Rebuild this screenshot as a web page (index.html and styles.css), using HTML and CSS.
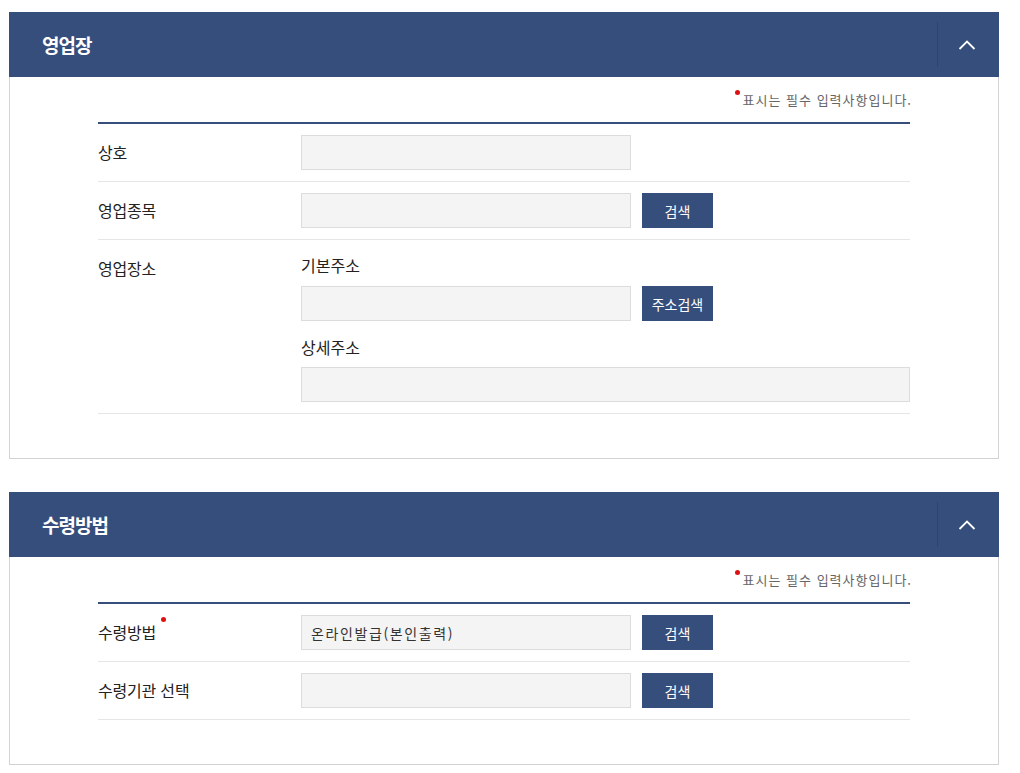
FILE: index.html
```html
<!DOCTYPE html>
<html lang="ko">
<head>
<meta charset="utf-8">
<title>영업장</title>
<link rel="stylesheet" href="styles.css">
</head>
<body>
<div class="page">
  <section class="panel">
    <div class="panel-head">
      <h2 class="panel-title">영업장</h2>
      <button class="toggle" type="button" aria-label="접기">
        <svg width="18" height="10" viewBox="0 0 18 10"><path d="M1.5 9 L9 1.5 L16.5 9" fill="none" stroke="#fff" stroke-width="1.8"/></svg>
      </button>
    </div>
    <div class="panel-body">
      <p class="req-note"><span class="dot"></span>표시는 필수 입력사항입니다.</p>
      <div class="form">
        <div class="row">
          <div class="label">상호</div>
          <div class="field"><input class="inp" type="text"></div>
        </div>
        <div class="row">
          <div class="label">영업종목</div>
          <div class="field"><div class="group"><input class="inp" type="text"><button class="btn" type="button">검색</button></div></div>
        </div>
        <div class="row">
          <div class="label">영업장소</div>
          <div class="field">
            <div class="sub-label">기본주소</div>
            <div class="group"><input class="inp" type="text"><button class="btn" type="button">주소검색</button></div>
            <div class="sub-label second">상세주소</div>
            <input class="inp wide" type="text">
          </div>
        </div>
      </div>
    </div>
  </section>

  <section class="panel">
    <div class="panel-head">
      <h2 class="panel-title">수령방법</h2>
      <button class="toggle" type="button" aria-label="접기">
        <svg width="18" height="10" viewBox="0 0 18 10"><path d="M1.5 9 L9 1.5 L16.5 9" fill="none" stroke="#fff" stroke-width="1.8"/></svg>
      </button>
    </div>
    <div class="panel-body">
      <p class="req-note"><span class="dot"></span>표시는 필수 입력사항입니다.</p>
      <div class="form">
        <div class="row">
          <div class="label"><span class="req">수령방법</span></div>
          <div class="field"><div class="group"><input class="inp filled" type="text" value="온라인발급(본인출력)"><button class="btn" type="button">검색</button></div></div>
        </div>
        <div class="row">
          <div class="label">수령기관 선택</div>
          <div class="field"><div class="group"><input class="inp" type="text"><button class="btn" type="button">검색</button></div></div>
        </div>
      </div>
    </div>
  </section>
</div>
</body>
</html>
```

FILE: styles.css
```css
* { box-sizing: border-box; }
html, body { margin: 0; padding: 0; background: #fff; }
body { font-family: "Noto Sans CJK KR", "Noto Sans", sans-serif; color: #333; }
.page { padding: 12px 0 0 9px; width: 999px; }
.panel { width: 990px; margin-bottom: 33px; }
.panel-head {
  height: 65px;
  background: #354e7b;
  display: flex;
  align-items: center;
  justify-content: space-between;
  padding-left: 33px;
}
.panel-title {
  margin: 0;
  color: #fff;
  font-size: 19px;
  font-weight: 700;
  letter-spacing: -1px;
}
.toggle {
  width: 62px;
  height: 45px;
  border: 0;
  border-left: 1px solid #2d4470;
  background: transparent;
  display: flex;
  align-items: center;
  justify-content: center;
  padding: 0 4px 0 0;
  cursor: pointer;
}
.panel-body {
  border: 1px solid #d3d3d3;
  border-top: 0;
  padding: 13px 86px 44px 88px;
}
.req-note {
  margin: 0 0 12px 0;
  text-align: right;
  font-size: 13px;
  line-height: 20px;
  color: #666;
  letter-spacing: 1px;
}
.dot {
  display: inline-block;
  width: 5px;
  height: 5px;
  border-radius: 50%;
  background: #e01010;
  vertical-align: top;
  margin-top: 0px;
  margin-right: 3px;
}
.form { border-top: 2px solid #354e7b; margin-right: 2px; }
.row {
  display: flex;
  border-bottom: 1px solid #e6e6e6;
  padding: 11px 0;
}
.label {
  width: 203px;
  flex: none;
  font-size: 16px;
  line-height: 35px;
  color: #222;
  letter-spacing: -0.2px;
}
.req { position: relative; }
.req::after {
  content: "";
  position: absolute;
  right: -10px;
  top: -3px;
  width: 5px;
  height: 5px;
  border-radius: 50%;
  background: #e01010;
}
.field { flex: 1; }
.group { display: flex; gap: 11px; }
.inp {
  width: 330px;
  height: 35px;
  background: #f4f4f4;
  border: 1px solid #dcdcdc;
  padding: 0 9px;
  font-family: "Noto Sans CJK KR", sans-serif;
  font-size: 14px;
  color: #333;
  outline: none;
}
.inp.filled { letter-spacing: 1.6px; }
.inp.wide { width: 609px; display: block; }
.btn {
  width: 71px;
  height: 35px;
  background: #354e7b;
  border: 0;
  color: #fff;
  font-family: "Noto Sans CJK KR", sans-serif;
  font-size: 14px;
  padding: 0;
  cursor: pointer;
}
.sub-label {
  font-size: 16px;
  line-height: 28px;
  margin-bottom: 7px;
  color: #222;
}
.sub-label.second { margin-top: 12px; margin-bottom: 6px; }
```
